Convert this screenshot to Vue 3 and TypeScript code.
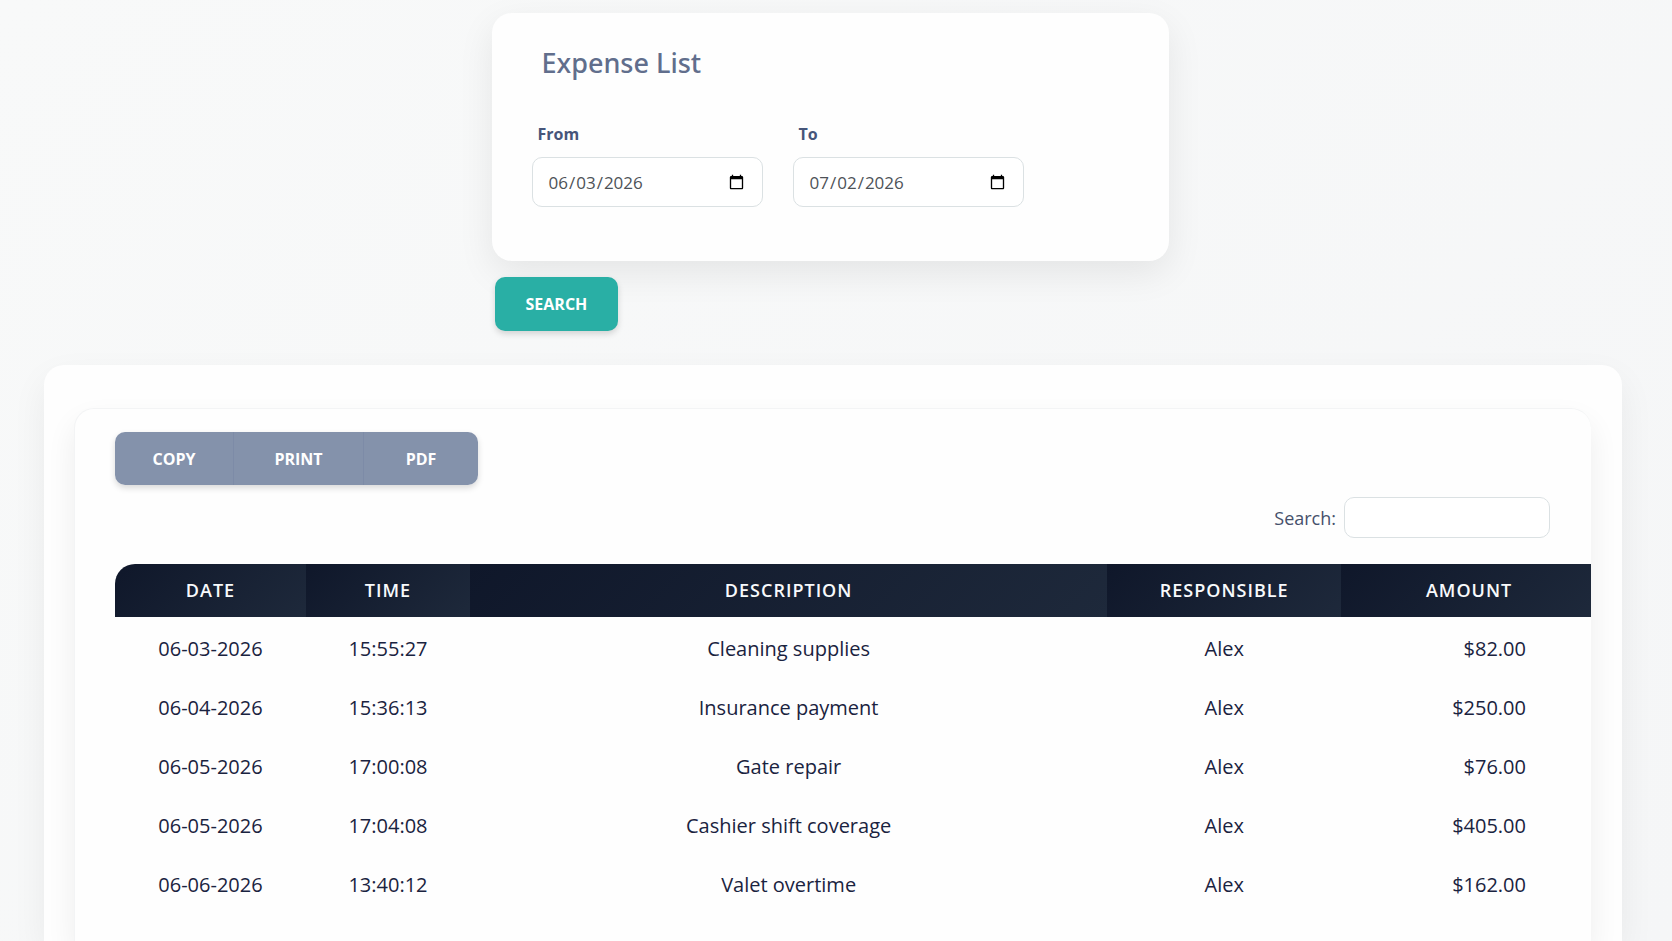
<script setup lang="ts">
import { computed, ref } from 'vue'

interface Expense {
  date: string
  time: string
  description: string
  responsible: string
  amount: number
}

const from = ref('2026-06-03')
const to = ref('2026-07-02')
const query = ref('')

const expenses: Expense[] = [
  { date: '06-03-2026', time: '15:55:27', description: 'Cleaning supplies', responsible: 'Alex', amount: 82 },
  { date: '06-04-2026', time: '15:36:13', description: 'Insurance payment', responsible: 'Alex', amount: 250 },
  { date: '06-05-2026', time: '17:00:08', description: 'Gate repair', responsible: 'Alex', amount: 76 },
  { date: '06-05-2026', time: '17:04:08', description: 'Cashier shift coverage', responsible: 'Alex', amount: 405 },
  { date: '06-06-2026', time: '13:40:12', description: 'Valet overtime', responsible: 'Alex', amount: 162 },
]

const money = (value: number): string => `$${value.toFixed(2)}`

const visible = computed(() => {
  const q = query.value.trim().toLowerCase()
  if (!q) return expenses
  return expenses.filter((e) =>
    [e.date, e.time, e.description, e.responsible, money(e.amount)].some((v) => v.toLowerCase().includes(q)),
  )
})
</script>

<template>
  <div class="page">
    <form class="filter" @submit.prevent>
      <section class="filter-card">
        <h1>Expense List</h1>
        <div class="fields">
          <div class="field">
            <label for="from">From</label>
            <input id="from" v-model="from" type="date" />
          </div>
          <div class="field">
            <label for="to">To</label>
            <input id="to" v-model="to" type="date" />
          </div>
        </div>
      </section>
      <button class="submit" type="submit">SEARCH</button>
    </form>

    <main class="panel">
      <section class="table-card">
        <div class="exports">
          <button type="button">COPY</button>
          <button type="button">PRINT</button>
          <button type="button">PDF</button>
        </div>
        <div class="search">
          <label for="search">Search:</label>
          <input id="search" v-model="query" type="search" />
        </div>
        <div class="table-wrap">
          <table>
            <colgroup>
              <col class="c-date" />
              <col class="c-time" />
              <col class="c-desc" />
              <col class="c-resp" />
              <col class="c-amount" />
            </colgroup>
            <thead>
              <tr>
                <th scope="col">DATE</th>
                <th scope="col">TIME</th>
                <th scope="col">DESCRIPTION</th>
                <th scope="col">RESPONSIBLE</th>
                <th scope="col">AMOUNT</th>
              </tr>
            </thead>
            <tbody>
              <tr v-for="e in visible" :key="e.date + e.time">
                <td>{{ e.date }}</td>
                <td>{{ e.time }}</td>
                <td>{{ e.description }}</td>
                <td>{{ e.responsible }}</td>
                <td class="amount">{{ money(e.amount) }}</td>
              </tr>
            </tbody>
          </table>
        </div>
      </section>
    </main>
  </div>
</template>

<style>
body {
  background: #f7f8f8;
}
</style>

<style scoped>
* {
  box-sizing: border-box;
}
.page {
  display: flex;
  flex-direction: column;
  min-height: 100vh;
  padding: 13px 12px 0 0;
  background: linear-gradient(135deg, #f8f9f9, #f5f6f7);
  font-family: 'Open Sans', 'Noto Sans', sans-serif;
  color: #1a2340;
}
button,
input {
  font-family: inherit;
}
.filter {
  width: 100%;
  max-width: 677px;
  margin: 0 auto;
}
.filter-card {
  padding: 32px 40px 54px;
  border-radius: 20px;
  background: #fefefe;
  box-shadow: 0 12px 36px rgba(0, 0, 0, 0.08);
}
h1 {
  margin: 0 0 41px 10px;
  font-family: 'Noto Sans', 'Open Sans', sans-serif;
  font-size: 27px;
  line-height: 36px;
  font-weight: 500;
  color: #616e8c;
}
.fields {
  display: flex;
  gap: 30px;
}
.field {
  display: flex;
  flex-direction: column;
  gap: 11px;
  width: 231px;
}
.field label {
  padding-left: 6px;
  font-size: 16px;
  line-height: 24px;
  font-weight: 700;
  color: #46557a;
}
.field input {
  height: 50px;
  padding: 0 15px;
  border: 1px solid #dbe1e3;
  border-radius: 10px;
  background: #fff;
  font-size: 17px;
  color: #4d5257;
}
.submit {
  display: block;
  height: 54px;
  margin: 16px 0 0 3px;
  padding: 0 31px;
  border: 0;
  border-radius: 10px;
  background: #29afa5;
  box-shadow: 0 3px 6px rgba(0, 0, 0, 0.15);
  font-size: 16px;
  font-weight: 700;
  color: #fff;
}
.panel {
  display: flex;
  flex: 1;
  margin: 34px 38px 0 44px;
  padding: 43px 31px 0 30px;
  border-radius: 20px 20px 0 0;
  background: #fefefe;
  box-shadow: 0 14px 36px rgba(0, 0, 0, 0.06);
  overflow: hidden;
}
.table-card {
  flex: 1;
  min-width: 0;
  padding: 23px 0 26px 40px;
  border: 1px solid #f3f4f5;
  border-right: 0;
  border-bottom: 0;
  border-radius: 20px 20px 0 0;
  background: #fefefe;
  box-shadow: 0 14px 30px rgba(0, 0, 0, 0.07);
}
.exports {
  display: inline-grid;
  grid-template-columns: 118px 130px 115px;
  border-radius: 10px;
  overflow: hidden;
  box-shadow: 0 3px 6px rgba(0, 0, 0, 0.15);
}
.exports button {
  height: 53px;
  padding: 0;
  border: 0;
  background: #8492ab;
  font-size: 16px;
  font-weight: 700;
  color: #fff;
}
.exports button + button {
  border-left: 1px solid #7d8ba7;
}
.search {
  display: flex;
  justify-content: flex-end;
  align-items: center;
  gap: 8px;
  margin: 12px 41px 26px 0;
}
.search label {
  font-size: 18px;
  color: #46506b;
}
.search input {
  width: 206px;
  height: 41px;
  padding: 0 12px;
  border: 1px solid #dbe1e3;
  border-radius: 10px;
  background: #fff;
  font-size: 18px;
}
.table-wrap {
  overflow: hidden;
  border-radius: 20px 0 0 0;
}
table {
  width: calc(100% + 6px);
  border-collapse: collapse;
  table-layout: fixed;
}
.c-date {
  width: 191px;
}
.c-time {
  width: 164px;
}
.c-desc {
  width: 43%;
}
.c-resp {
  width: 234px;
}
th {
  height: 53px;
  padding: 0 0 2px;
  background: linear-gradient(135deg, #0f172a, #1e293b);
  font-size: 18px;
  font-weight: 600;
  letter-spacing: 1px;
  color: #f8fafc;
}
td {
  height: 59px;
  padding: 4px 0 0;
  font-size: 20px;
  text-align: center;
}
td.amount {
  padding-right: 71px;
  text-align: right;
}
</style>
